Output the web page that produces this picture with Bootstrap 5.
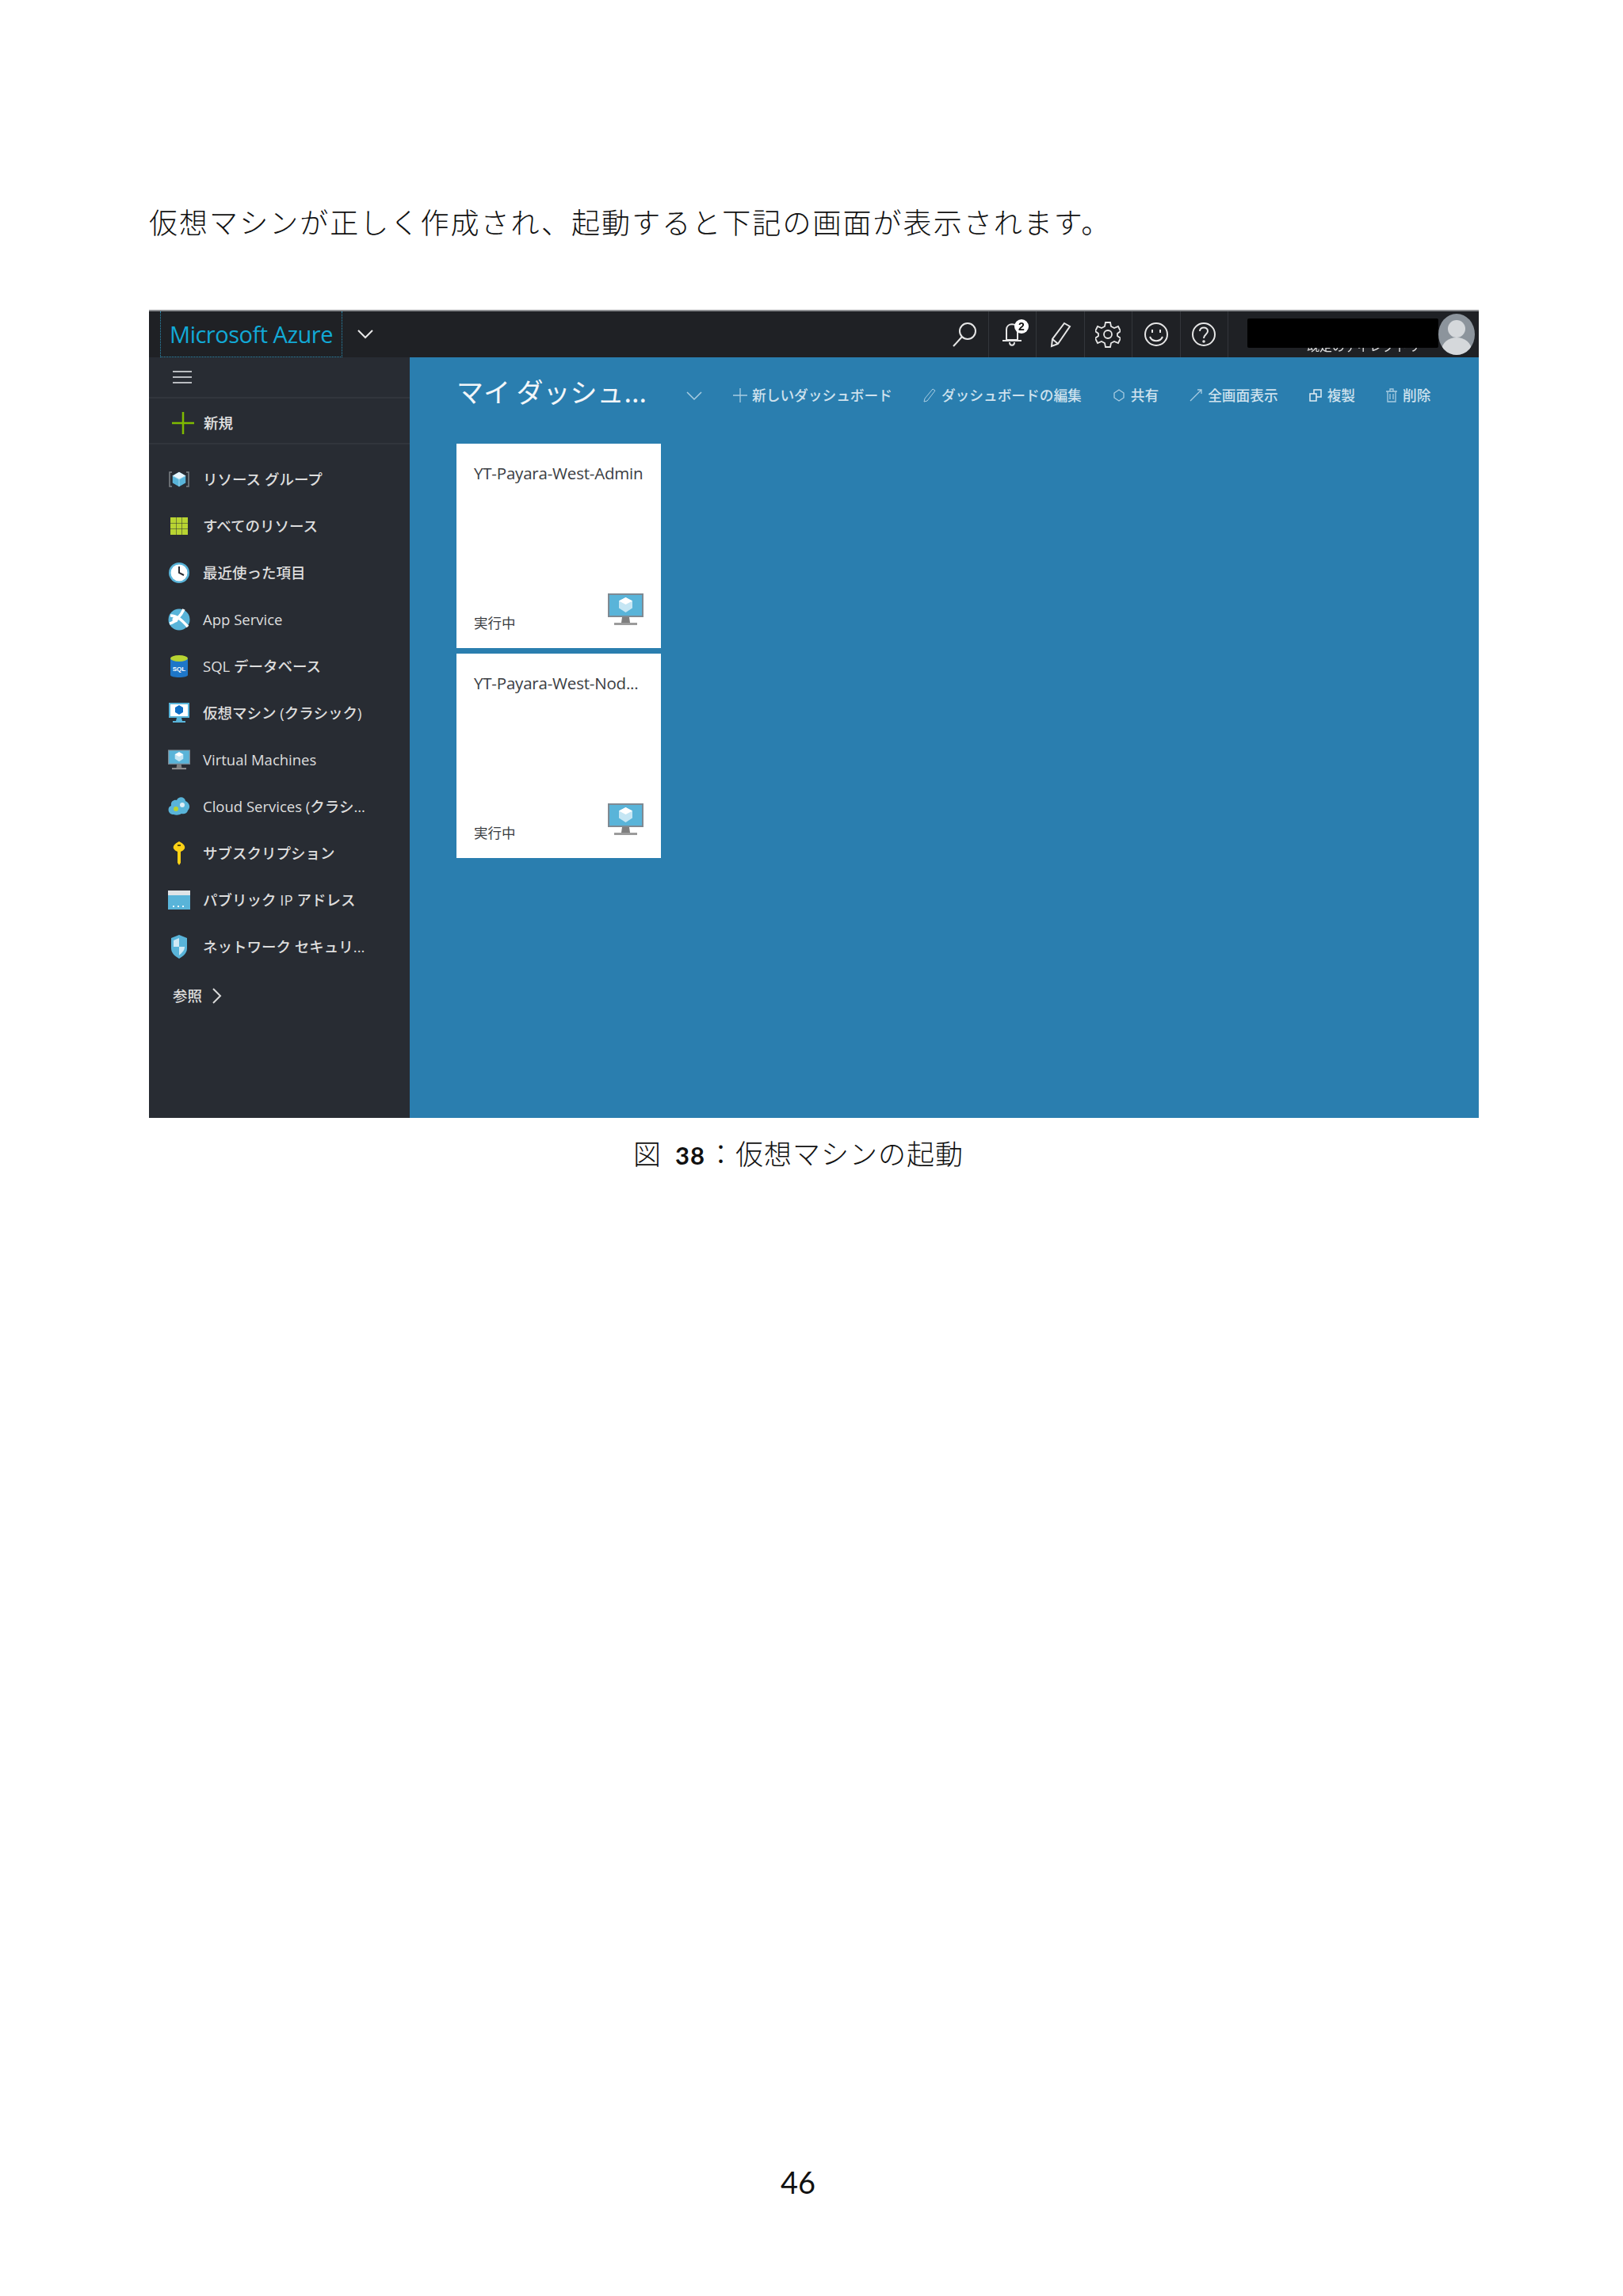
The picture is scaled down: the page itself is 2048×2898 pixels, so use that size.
<!DOCTYPE html>
<html lang="ja">
<head>
<meta charset="UTF-8">
<title>仮想マシンの起動</title>
<link href="https://cdn.jsdelivr.net/npm/bootstrap@5.3.0/dist/css/bootstrap.min.css" rel="stylesheet">
<style>
  body { background: #fff; color: #111; font-family: "Open Sans", "Noto Sans CJK JP", sans-serif; }
  .sheet { width: 2048px; height: 2898px; padding: 0 182px 0 188px; }
  .lead-line { padding-top: 254px; height: 391px; margin: 0; font-family: "Noto Sans CJK JP", sans-serif; font-weight: 300; font-size: 36px; letter-spacing: 2.05px; line-height: 50px; white-space: nowrap; }
  .shot { height: 1020px; border-top: 2px solid #8d8f92; filter: blur(.55px); overflow: hidden; }
  .topbar { height: 58px; background: #1f2125; }
  .brand { width: 230px; margin-left: 14px; border: 1px dotted #2b8fb5; border-top: 0; color: #12a9d6; font-size: 29px; line-height: 57px; text-align: center; white-space: nowrap; letter-spacing: -.5px; }
  .top-chev { width: 57px; }
  .top-cell { width: 60.5px; border-right: 1px solid #33363b; }
  .cell-badge { position: absolute; top: 10px; right: 9px; width: 18px; height: 18px; border-radius: 50%; background: #fff; color: #111; font: 700 14px/18px "Liberation Sans", sans-serif; text-align: center; }
  .account { width: 316px; padding-left: 24px; }
  .account-name { width: 241px; height: 50px; color: #ddd; font-size: 16px; line-height: 20px; text-align: right; padding: 26px 23px 0 0; margin-top: 8px; position: relative; white-space: nowrap; }
  .name-mask { position: absolute; left: 0; top: 1px; width: 241px; height: 37px; background: #000; border-radius: 2px; }
  .avatar { width: 46px; height: 52px; border-radius: 50%; background: #8c949c; overflow: hidden; margin-top: 3px; }
  .body-row { height: 960px; }
  .side { width: 329px; background: #282c33; color: #dedede; font-size: 18.5px; font-weight: 500; }
  .side-burger { height: 52px; padding-left: 30px; border-bottom: 2px solid #31353c; }
  .side-new { height: 58px; padding: 5px 0 0 29px; border-bottom: 2px solid #31353c; gap: 12px; color: #e4e4e4; }
  .side-list { padding-top: 14px; }
  .side-item { height: 59px; padding-left: 24px; gap: 16px; white-space: nowrap; }
  .side-icon { width: 28px; height: 32px; flex: none; }
  .side-more { height: 66px; padding-left: 30px; gap: 12px; }
  .board { background: #2a7eaf; padding: 0 0 0 59px; color: #cfe2ee; }
  .board-head { height: 109px; padding-bottom: 22px; }
  .board-title { width: 289px; color: #f2f6f9; font-size: 34px; font-weight: 400; margin: 0; white-space: nowrap; font-family: "Noto Sans CJK JP", sans-serif; }
  .board-chev { margin-top: 10px; }
  .tool-strip { margin: 10px 0 0 38px; font-size: 17.7px; font-weight: 500; white-space: nowrap; }
  .tool-item { gap: 6px; }
  .tool-gap { margin-left: 38px; }
  .tile { width: 258px; height: 258px; background: #fff; color: #3a3d42; padding: 24px 22px 20px; margin-bottom: 7px; }
  .tile-name { font-size: 20.5px; line-height: 26px; letter-spacing: -.2px; white-space: nowrap; }
  .tile-state { font-size: 17.5px; line-height: 24px; }
  .caption { padding-top: 21px; padding-left: 611px; height: 1320px; font-family: "Noto Sans CJK JP", sans-serif; font-weight: 300; font-size: 35px; line-height: 46px; white-space: nowrap; letter-spacing: 1px; }
  .caption b { font-family: Lato, sans-serif; font-weight: 700; font-size: 31px; margin: 0 2px 0 17px; }
  .page-no { margin: 0; padding-left: 797px; font-family: Lato, sans-serif; font-size: 38px; line-height: 46px; }
</style>
</head>
<body>
<svg width="0" height="0" class="d-block">
  <defs>
    <symbol id="cube" viewBox="0 0 24 24">
      <path d="M12 2 21 7v10l-9 5-9-5V7z" fill="#59b4d9"/>
      <path d="M12 2 21 7l-9 5-9-5z" fill="#e8f5fb"/>
      <path d="M12 12v10M3 7l9 5 9-5" stroke="#a8daf0" fill="none"/>
    </symbol>
    <symbol id="vm" viewBox="0 0 45 41">
      <rect x="0" y="0" width="45" height="30" fill="#7f8a93"/>
      <rect x="2" y="2" width="41" height="26" fill="#59b4d9"/>
      <path d="M22.500 5 31 9.500v9L22.500 24 14 18.500v-9z" fill="#c5e6f4"/>
      <path d="M22.500 5 31 9.500l-8.500 4.500L14 9.500z" fill="#fff"/>
      <path d="M18 30h9l1 7H17z" fill="#7f7f7f"/>
      <rect x="8" y="37" width="29" height="3" fill="#9b9b9b"/>
    </symbol>
  </defs>
</svg>
<div class="sheet">
  <p class="lead-line">仮想マシンが正しく作成され、起動すると下記の画面が表示されます。</p>

  <div class="shot">
    <div class="topbar d-flex">
      <div class="brand">Microsoft Azure</div>
      <div class="top-chev d-flex align-items-center justify-content-center">
        <svg width="22" height="14" viewBox="0 0 22 14"><path d="M2 2l9 9 9-9" fill="none" stroke="#e8e8e8" stroke-width="2"/></svg>
      </div>
      <div class="flex-grow-1"></div>
      <div class="top-cell d-flex align-items-center justify-content-center">
        <svg width="34" height="34" viewBox="0 0 34 34" fill="none" stroke="#e6e6e6" stroke-width="2"><circle cx="21" cy="13" r="10"/><path d="M14 20 3 32"/></svg>
      </div>
      <div class="top-cell position-relative d-flex align-items-center justify-content-center">
        <svg width="30" height="34" viewBox="0 0 30 34" fill="none" stroke="#e6e6e6" stroke-width="2"><path d="M8 24V11c0-9 14-9 14 0v13zM3 25h24M12 27c0 5 6 5 6 0"/></svg>
        <span class="cell-badge">2</span>
      </div>
      <div class="top-cell d-flex align-items-center justify-content-center">
        <svg width="30" height="34" viewBox="0 0 30 34" fill="none" stroke="#e6e6e6" stroke-width="2"><path d="M20 3l7 4L12 29l-8 3 1-9zM5 23l7 6"/></svg>
      </div>
      <div class="top-cell d-flex align-items-center justify-content-center">
        <svg width="32" height="34" viewBox="0 0 32 34" fill="none" stroke="#e6e6e6" stroke-width="1.800"><circle cx="16" cy="17" r="5"/><path d="M13 2h6l1 5 4 2 5-2 3 6-4 3v3l4 3-3 6-5-2-4 2-1 5h-6l-1-5-4-2-5 2-3-6 4-3v-3L0 13l3-6 5 2 4-2z"/></svg>
      </div>
      <div class="top-cell d-flex align-items-center justify-content-center">
        <svg width="32" height="32" viewBox="0 0 32 32" fill="none" stroke="#e6e6e6" stroke-width="2"><circle cx="16" cy="16" r="14"/><path d="M8 19c3 7 13 7 16 0"/><path d="M11 10v4M21 10v4"/></svg>
      </div>
      <div class="top-cell d-flex align-items-center justify-content-center">
        <svg width="32" height="32" viewBox="0 0 32 32" fill="none" stroke="#e6e6e6" stroke-width="2"><circle cx="16" cy="16" r="14"/><path d="M11 12c0-6 10-6 10 0 0 4-5 4-5 9"/><circle cx="16" cy="25" r=".8"/></svg>
      </div>
      <div class="account d-flex">
        <div class="account-name">既定のディレクトリ<div class="name-mask"></div></div>
        <div class="avatar">
          <svg width="46" height="52" viewBox="0 0 46 52"><circle cx="23" cy="19" r="11" fill="#d5d8db"/><ellipse cx="23" cy="46" rx="19" ry="16" fill="#d5d8db"/></svg>
        </div>
      </div>
    </div>

    <div class="body-row d-flex">
      <div class="side">
        <div class="side-burger d-flex align-items-center">
          <svg width="24" height="16" viewBox="0 0 24 16" fill="#b9bcc0"><rect width="24" height="2"/><rect y="7" width="24" height="2"/><rect y="14" width="24" height="2"/></svg>
        </div>
        <div class="side-new d-flex align-items-center">
          <svg width="28" height="28" viewBox="0 0 28 28"><path d="M14 0v28M0 14h28" stroke="#7fba00" stroke-width="2.500"/></svg>
          <span>新規</span>
        </div>
        <div class="side-list">
          <div class="side-item d-flex align-items-center">
            <svg class="side-icon" viewBox="0 0 28 32"><path d="M5 7H2v18h3M23 7h3v18h-3" fill="none" stroke="#7d8288" stroke-width="1.500"/><use href="#cube" x="3" y="5" width="22" height="22"/></svg>
            <span>リソース グループ</span>
          </div>
          <div class="side-item d-flex align-items-center">
            <svg class="side-icon" viewBox="0 0 28 32" fill="#b8d432"><rect x="3" y="5" width="7" height="7"/><rect x="10.500" y="5" width="7" height="7"/><rect x="18" y="5" width="7" height="7"/><rect x="3" y="12.500" width="7" height="7"/><rect x="10.500" y="12.500" width="7" height="7"/><rect x="18" y="12.500" width="7" height="7"/><rect x="3" y="20" width="7" height="7"/><rect x="10.500" y="20" width="7" height="7"/><rect x="18" y="20" width="7" height="7"/></svg>
            <span>すべてのリソース</span>
          </div>
          <div class="side-item d-flex align-items-center">
            <svg class="side-icon" viewBox="0 0 28 32"><circle cx="14" cy="16" r="13" fill="#59b4d9"/><circle cx="14" cy="16" r="10.500" fill="#fff"/><path d="M14 8v8l6 3" fill="none" stroke="#282c33" stroke-width="2"/></svg>
            <span>最近使った項目</span>
          </div>
          <div class="side-item d-flex align-items-center">
            <svg class="side-icon" viewBox="0 0 28 32"><circle cx="14" cy="16" r="13.500" fill="#59b4d9"/><path d="M3 11c8 0 14 5 22 14M2 21c6-1 14-9 18-18" fill="none" stroke="#fff" stroke-width="3.500"/><circle cx="9" cy="16" r="3.500" fill="#fff"/></svg>
            <span>App Service</span>
          </div>
          <div class="side-item d-flex align-items-center">
            <svg class="side-icon" viewBox="0 0 28 32"><path d="M3 6v21c0 4 22 4 22 0V6z" fill="#1e76c8"/><ellipse cx="14" cy="6" rx="11" ry="4" fill="#b8d432"/><text x="14" y="22" font-size="8" font-weight="700" fill="#fff" text-anchor="middle" font-family="Liberation Sans, sans-serif">SQL</text></svg>
            <span>SQL データベース</span>
          </div>
          <div class="side-item d-flex align-items-center">
            <svg class="side-icon" viewBox="0 0 28 32"><rect x="1" y="3" width="26" height="19" fill="#59b4d9"/><rect x="3" y="5" width="22" height="15" fill="#fff"/><path d="M14 6l5 3v6l-5 3-5-3V9z" fill="#0f6fc6"/><path d="M11 22h6l1 4h-8zM6 26h16v2H6z" fill="#59b4d9"/></svg>
            <span>仮想マシン (クラシック)</span>
          </div>
          <div class="side-item d-flex align-items-center">
            <svg class="side-icon" viewBox="0 0 45 45"><use href="#vm" x="0" y="2" width="45" height="41"/></svg>
            <span>Virtual Machines</span>
          </div>
          <div class="side-item d-flex align-items-center">
            <svg class="side-icon" viewBox="0 0 28 32"><path d="M7 26c-8 0-8-10-3-11-1-5 3-8 7-7 2-5 10-5 11 1 5 2 7 8 3 12-1 4-5 5-8 4-3 2-7 2-10 1z" fill="#59b4d9"/><circle cx="10" cy="19" r="3" fill="#b8d432"/><circle cx="18" cy="14" r="3" fill="#dfeef6"/></svg>
            <span>Cloud Services (クラシ...</span>
          </div>
          <div class="side-item d-flex align-items-center">
            <svg class="side-icon" viewBox="0 0 28 32"><path d="M14 1c6 3 8 6 7 9-1 2-3 3-5 4v14l-2 3-2-3V14c-2-1-4-2-5-4-1-3 1-6 7-9z" fill="#fcd116"/><rect x="12" y="5" width="4" height="2" fill="#5a4b00"/></svg>
            <span>サブスクリプション</span>
          </div>
          <div class="side-item d-flex align-items-center">
            <svg class="side-icon" viewBox="0 0 28 32"><rect y="4" width="28" height="24" fill="#59b4d9"/><rect y="4" width="28" height="6" fill="#dfe3e6"/><path d="M6 24h2M12 24h2M18 24h2" stroke="#e8f5fb" stroke-width="2"/></svg>
            <span>パブリック IP アドレス</span>
          </div>
          <div class="side-item d-flex align-items-center">
            <svg class="side-icon" viewBox="0 0 28 32"><path d="M14 1l10 4v13c0 6-5 10-10 13-5-3-10-7-10-13V5z" fill="#59b4d9"/><path d="M14 5v11H7V8zM14 16h7c0 5-4 8-7 11z" fill="#cfe9f5"/></svg>
            <span>ネットワーク セキュリ...</span>
          </div>
          <div class="side-more d-flex align-items-center">
            <span>参照</span>
            <svg width="13" height="22" viewBox="0 0 13 22"><path d="M2 2l9 9-9 9" fill="none" stroke="#d9d9d9" stroke-width="2"/></svg>
          </div>
        </div>
      </div>

      <div class="board flex-grow-1">
        <div class="board-head d-flex align-items-center">
          <h1 class="board-title">マイ ダッシュ...</h1>
          <svg class="board-chev" width="22" height="14" viewBox="0 0 22 14"><path d="M2 2l9 9 9-9" fill="none" stroke="#a9cde2" stroke-width="1.500"/></svg>
          <div class="tool-strip d-flex align-items-center">
            <div class="tool-item d-flex align-items-center">
              <svg width="18" height="18" viewBox="0 0 18 18"><path d="M9 0v18M0 9h18" stroke="#a9cde2" stroke-width="1.300"/></svg><span>新しいダッシュボード</span>
            </div>
            <div class="tool-item tool-gap d-flex align-items-center">
              <svg width="18" height="18" viewBox="0 0 18 18" fill="none" stroke="#a9cde2"><path d="M13 1l3 2L6 16l-4 1 1-4z"/></svg><span>ダッシュボードの編集</span>
            </div>
            <div class="tool-item tool-gap d-flex align-items-center">
              <svg width="18" height="18" viewBox="0 0 18 18" fill="none" stroke="#a9cde2" stroke-width="1.300"><path d="M9 2l6 4v6l-6 4-6-4V6z"/></svg><span>共有</span>
            </div>
            <div class="tool-item tool-gap d-flex align-items-center">
              <svg width="18" height="18" viewBox="0 0 18 18" fill="none" stroke="#a9cde2" stroke-width="1.300"><path d="M2 16 16 2M11 2h5v5"/></svg><span>全画面表示</span>
            </div>
            <div class="tool-item tool-gap d-flex align-items-center">
              <svg width="18" height="18" viewBox="0 0 18 18" fill="none" stroke="#e3eef5" stroke-width="1.500"><rect x="2" y="7" width="8" height="9"/><path d="M7 7V2h9v9h-6"/></svg><span>複製</span>
            </div>
            <div class="tool-item tool-gap d-flex align-items-center">
              <svg width="16" height="18" viewBox="0 0 16 18" fill="none" stroke="#a9cde2" stroke-width="1.300"><path d="M3 4h10v13H3zM1 4h14M6 4V1h4v3M6 7v7M10 7v7"/></svg><span>削除</span>
            </div>
          </div>
        </div>

        <div class="tile d-flex flex-column justify-content-between">
          <div class="tile-name">YT-Payara-West-Admin</div>
          <div class="d-flex justify-content-between align-items-end">
            <span class="tile-state">実行中</span>
            <svg width="45" height="41" class="mb-2"><use href="#vm"/></svg>
          </div>
        </div>
        <div class="tile d-flex flex-column justify-content-between">
          <div class="tile-name">YT-Payara-West-Nod...</div>
          <div class="d-flex justify-content-between align-items-end">
            <span class="tile-state">実行中</span>
            <svg width="45" height="41" class="mb-2"><use href="#vm"/></svg>
          </div>
        </div>
      </div>
    </div>
  </div>

  <div class="caption">図<b>38</b>：仮想マシンの起動</div>
  <p class="page-no">46</p>
</div>
<script src="https://cdn.jsdelivr.net/npm/bootstrap@5.3.0/dist/js/bootstrap.bundle.min.js"></script>
</body>
</html>
